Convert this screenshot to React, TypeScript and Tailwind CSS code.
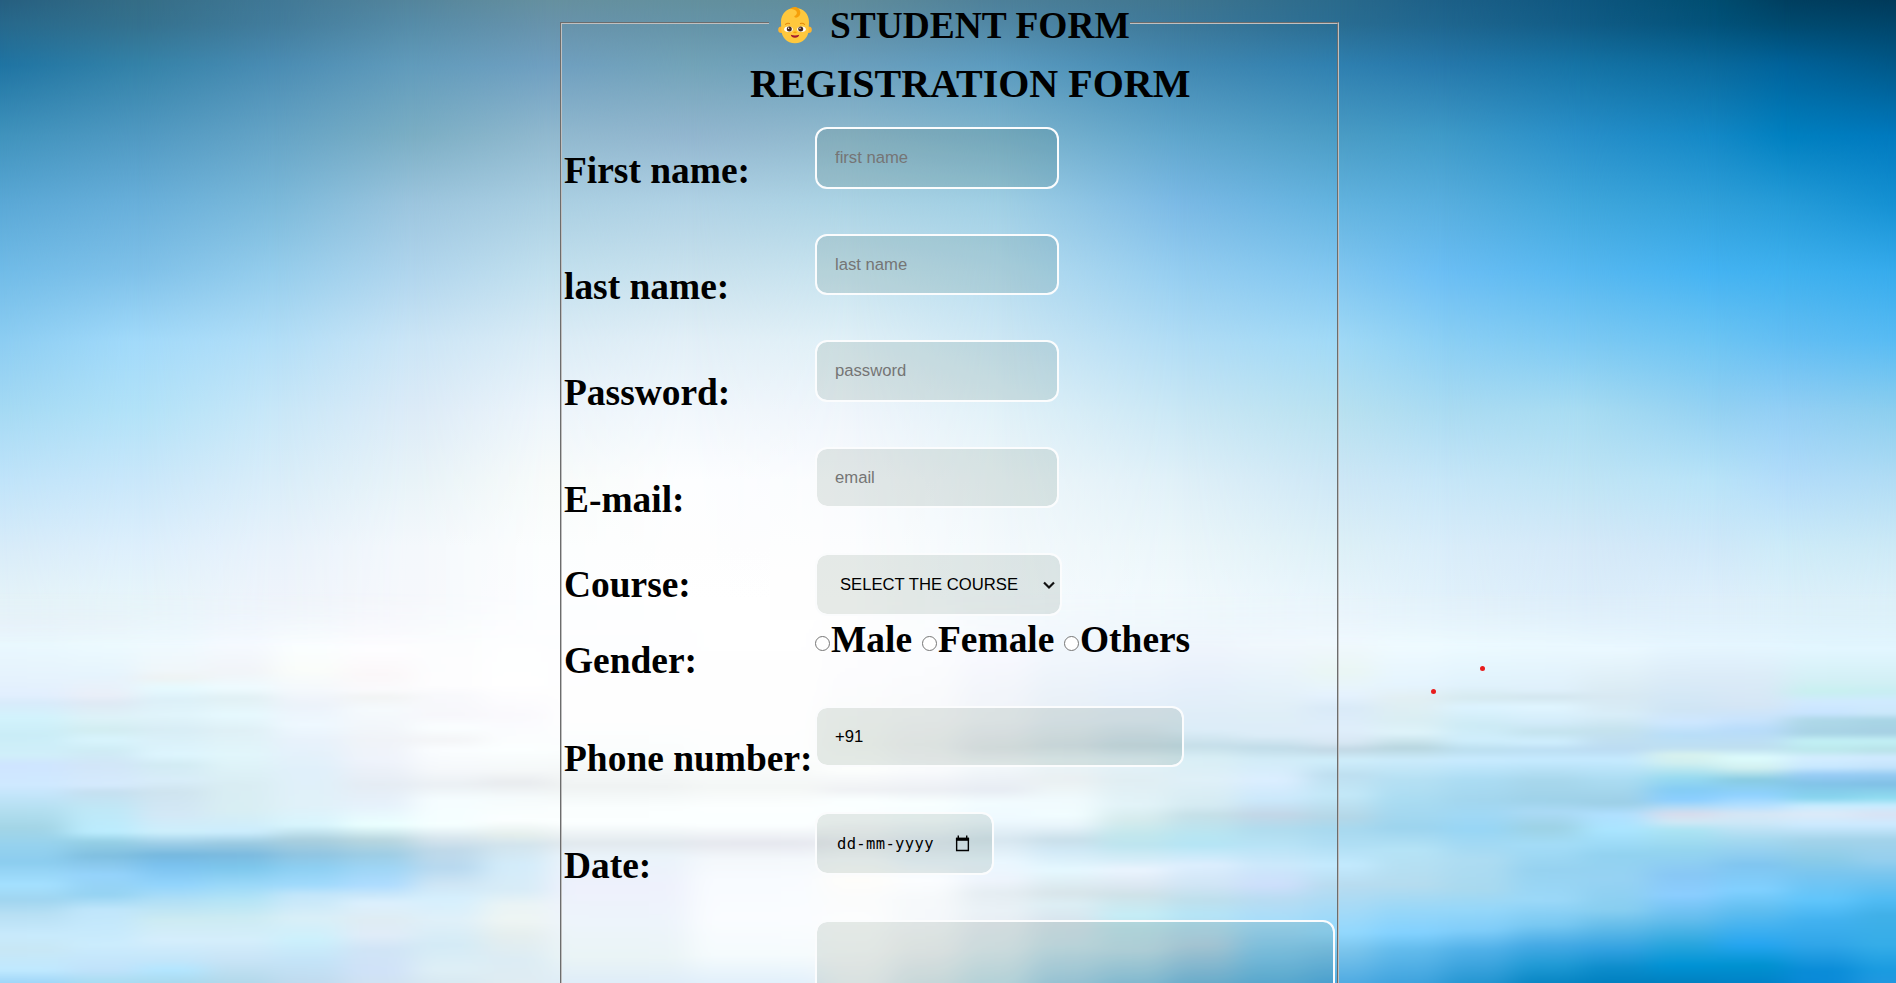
import type { ReactNode } from "react";

type Column = [number, string];

const SKY_ROWS = [0, 24, 65, 136, 203, 272, 341, 411, 480, 547, 600];

const SKY: Column[] = [
  [0, "265f80 27698c 1f74a3 4093bd 5aa8d6 71bce8 8ccdf2 a5daf4 c0e4fa d8ecf9 e5f3f9"],
  [137, "356d86 34718e 3482a8 5099c2 68afda 7fc1e9 a2dafa b2e2f8 c9e7fa ddeffc e7f5fa"],
  [274, "407896 427c9c 4a8cb3 65a4c6 7bb9da 95cdec b2def7 c8e7f8 d9edf9 e8f2fb eff4fb"],
  [412, "54859c 568ca8 619bbb 7baec4 9cc5de b0d5ed cbe5f6 dcebf7 e8f3f8 f4f8fc f6f8fc"],
  [550, "66909f 6893ab 6f9fc0 91b9cf aacfe2 c2e0ee dbecf6 edf5fb f8fbfa fcfefe fdfeff"],
  [690, "63909e 6594a8 72a3b8 92b6cf b0d2e5 c8e1ed e2eff7 f1f7fc fdfeff fefefe ffffff"],
  [850, "608c9b 6290a6 6b9fbd 90bace abd3e4 c7e3ef e0f0f7 eff5fb f9fbfe fcfdfe fefefe"],
  [1000, "4d8099 5087a5 5b9bbf 7eb4cd a0cfe4 b8ddef cde7f4 e1f1f8 eef6fa f3f9fc f5fafd"],
  [1180, "3f758f 3d7899 4288b1 5ea5cc 7ab9e5 94cdf0 b0dcf5 c9e7f5 dff0f8 ebf6fa f1f9fd"],
  [1340, "2a6a8c 2a6d92 2f80b0 4a9cc5 62b3df 80c6f0 a0d9f6 b8e1f0 cde7f6 ddf0f7 e8f5fc"],
  [1443, "1d6088 1f668f 2678ab 3f9ac8 58aede 6bbef4 8bcff4 aadbf2 c6e6f8 d9edfa e1f1fb"],
  [1580, "0f5780 115c86 1573a5 288fc9 3fa6db 57b8f0 7cc9f3 a8dcf2 bfe4f5 d5e9f8 dcedfa"],
  [1716, "004d70 02527a 0a699c 1388c6 2f9fd9 44b3f2 6cc4f3 94d1f2 b8e3f8 cfe8f9 deeffb"],
  [1785, "003f60 004a6f 00629a 0080c0 259bd8 3fb1ef 63bef3 93cff5 b2dcfa cdebf8 dcf0fa"],
  [1896, "003a5a 00456a 005888 0079be 1490d2 36abec 58bbf3 8cceee b0dcf4 cce9f6 dcf0f9"],
];

// Each band is [left edge, "offset:colour ..."] with offsets counted down from the horizon.
const HORIZON = 600;
const SEA: Column[] = [
  [0, "0:e4f1f6 22:e9f1fa 45:e9f8fe 75:e6f3fd 95:e2effe 103:d8ebfb 118:d2f3fc 135:caedf7 155:d0effa 165:cfe5ff 185:cfe9ff 195:c3e5fa 210:b3dff0 228:a3d5e6 245:96d2ee 262:8ccdef 285:a4e0ff 300:a0d5f0 315:b8e0f4 335:c8eafc 350:c8e7f5 370:c0e9ff 383:9fd6f8"],
  [68, "0:e4f1f6 22:eaf2f9 45:ecfafe 75:e6f4fd 95:eaeff8 103:dfe9f4 118:ddf2f8 130:d2edf1 140:d8f4fd 150:cfecf5 165:d2e6f8 185:d5eafd 192:c5dff0 210:bfe8f7 232:bbecfe 242:95cfe5 256:80bfe0 275:95d3fb 295:96d3f2 310:c0e6fb 345:cbecfd 370:c0e2fa 383:a8dcf2"],
  [137, "0:e8f4fa 45:effaff 70:f0f7fa 78:eef3f3 88:e6faff 100:dcf0f8 115:e0f4fb 130:d8edf5 155:ddf5fe 165:d2ebf3 180:d8edf9 192:cfe4ef 215:d3e8f6 232:cdeffc 243:a0cfe8 255:76b8de 265:7ac1ee 285:92d4fc 300:b0dff6 320:cdebf2 340:d5eefc 360:c3e6fa 370:b3e6ff 383:a9d9ee"],
  [205, "0:edf5fd 45:f5f9ff 72:f1f4f8 88:eefbff 98:e1f0f4 115:e6f9fe 130:dff0f6 155:e1f6fb 185:d9edf3 210:d8eef3 232:ccedfd 243:9ccbe2 255:7bbadf 268:7dc7ec 285:9ad8f8 300:b4e4f6 318:ccebf3 340:d5eefb 360:c8e4f6 383:b2d8ea"],
  [273, "0:f0f7fa 45:fafeff 70:fafdfa 90:f4f8fc 105:ecf2fa 125:eef8ff 140:e8f2fb 170:e0f0fa 205:e0f1f9 225:d8f5fd 240:aacfde 255:90c5e2 268:8dcff2 285:a0dafc 295:c3e6fa 318:d9eff8 340:ccf0fc 360:c4e4f8 383:c0dbef"],
  [343, "0:f6f6fb 50:fefdff 75:fbf7f9 90:fafafc 97:f2f4f4 110:f5fafd 140:f0f3f8 160:eff3fb 185:e5ecf4 205:e6f1fb 225:eaffff 240:b8d6df 255:9dcde5 268:9ed5f5 285:aedcff 295:c9e7fa 303:dcf0fd 320:dfecf3 335:e0ecf8 350:d0e4f6 370:d0e2f8 383:d0e2f3"],
  [412, "0:f8fcfe 50:fcfdfe 85:fdfdfe 95:f8f9fc 115:f7f7fb 128:fafeff 140:f4f5f7 150:fafdff 170:f5f8fb 185:ebf0f4 200:f5fdff 225:f5ffff 238:d8e6ee 250:c0d9e9 268:b8d9ef 285:cfe6f5 298:d5effd 320:dff0f9 345:d4ebf6 370:deeff6 383:d8e9f2"],
  [482, "0:fcfeff 85:ffffff 115:faf9fd 150:fbffff 170:f5f8f9 183:e8ebee 198:f5fbfc 220:fbffff 235:e4eeec 245:d2e4ed 265:d3ecfa 290:d8ecf7 305:eaf4f5 320:eef5f3 335:e5eeee 360:dcecf4 383:dfecf2"],
  [548, "0:fdfeff 120:fefefe 153:fafdfd 187:f0f3f3 207:fafefe 223:fbffff 243:e2e9ee 257:eaf3fa 287:eef1fc 323:edf4fb 357:eaf4f6 383:dfedf8"],
  [690, "0:ffffff 120:fefefe 153:fdfefe 187:f4f7f6 207:fcffff 225:fbffff 243:e6e8ef 260:f4f8fc 280:f8fbff 320:fafcff 355:f5fbfd 383:e2f0fb"],
  [822, "0:fefefe 80:fcfcfe 145:f9fbf9 170:fcfefd 190:eff1f4 200:faffff 220:fbfeff 243:eceff4 260:f7fbfd 280:fefdfa 300:fbfcfc 320:fcfdfd 350:f9fbfb 383:f0f4f7"],
  [892, "0:fcfdfe 60:fbfcfe 120:f8f9fb 145:f3f5f7 170:f9fbfd 190:eceff4 203:f8ffff 220:f6fdff 243:e2ebf3 262:eef8ff 280:fbfdff 300:f6f9fb 325:f5f8fb 350:f0f3f5 383:dce9ef"],
  [960, "0:f7fafd 60:f7f8fe 95:f2f5fa 120:f1f4f9 148:e6ebef 165:f3f8fb 190:e7ecf3 203:f2fcff 220:eef9ff 240:d8e7f0 262:eaf7ff 280:eef4fc 293:e5edf2 310:e9f1f6 325:e8eef4 350:dfecf2 383:c6e3ed"],
  [1030, "0:f2f8fd 60:f0f6fc 90:ebf2f9 120:e7eff6 146:dbe6ec 160:e9f4f8 180:eaf0f2 200:f0fafd 215:f1fdff 225:e9f5fb 240:c9dfea 250:d0e8f5 270:e5f8ff 293:d8e5ea 305:dceef4 320:d8e5ee 345:cce4ed 383:a5d1e7"],
  [1098, "0:eff8fc 60:eff5fc 90:e8f1fb 120:e2edf7 146:cddfe8 160:e3f2f9 180:e0eef3 205:e2f3f8 220:d5ebed 235:c2e7ed 245:bde5ef 260:d5edf8 270:eaf4fe 285:dce8f2 295:cfe2e8 315:c5edf6 330:c0e3ed 350:bfdeea 383:8fc8e4"],
  [1168, "0:edf7fb 50:eef4fc 80:e7f0fb 115:dfedf8 130:dcedf8 146:c6dfe9 158:d8eef5 180:dff0f8 205:d5ebf2 215:c5e0e8 235:b8e5f2 245:b5e5f5 265:dceefe 285:d0e5f5 300:bedfec 315:b5e4f6 345:b3d3e6 383:74b9de"],
  [1237, "0:ebf5fb 45:f0f7fd 85:e6f2fa 115:dfeef7 135:dcedf8 148:c1dce8 160:d2ecf8 180:dbeeff 200:cbe8fb 215:c2d6e7 230:b0dcee 245:b8e3f6 265:cce8fb 285:cddffb 300:b8dcf2 320:a8ddfa 350:85cbf0 383:60b4e1"],
  [1306, "0:ecf4fa 40:f0f8fe 72:eaf6f4 85:e8f5fa 95:e5f2fe 108:d9eaf8 130:dfeefb 142:d8e8f4 150:c2d8e5 160:cfeefb 175:bedff0 195:c3e8f8 217:b4d7e7 230:a8d9ef 245:b0def4 265:c3eafe 285:b8dcf0 310:a5daf7 333:92d8fd 350:7cc5ec 383:50abe2"],
  [1374, "0:e9f5fb 45:effbff 85:e5f4fe 98:e2eff3 120:daeef3 133:def3fa 148:b8d6df 160:cbebfb 180:b5e0f3 200:aadcf2 228:9dd4ee 250:b5e3f6 285:b5dcef 310:98d7f8 333:82d1ff 350:62bbec 383:3fa3de"],
  [1443, "0:e9f4fa 45:ecfaff 85:e0f2fc 98:d6eaf0 107:dcf3ff 125:cdebf5 140:cfeefc 150:bcdff0 160:c8ebff 180:abdcf3 200:a3d6ee 215:a0d8f5 230:98d6f5 260:addcf2 290:a8d9ef 310:95d7f9 330:80cdf9 350:50b0e8 383:2596d2"],
  [1511, "0:e5f3fa 45:ebf9ff 90:dff0fb 97:d3e6ef 107:e0f5ff 122:d3ecfa 132:c4e3ee 142:cfeefe 150:bddff3 160:c5eaff 180:a8d7ec 200:9fd2e9 212:abdaf5 228:9dd2e5 245:a3dcf7 270:96d2f0 300:9bd8f8 325:78c8f2 345:45aae5 365:209ad5 383:0886c4"],
  [1581, "0:e3f2fb 50:eaf8ff 97:d8e9f2 115:d8edf8 130:c5e2ee 150:bcdcf3 160:c5eaff 180:abdcf2 203:9dcfe6 215:b0e0ff 230:aae5ff 255:92d2f0 280:96d2f3 310:88cef0 330:5cb8e8 350:30a0e0 368:0c8ccb 383:0080c0"],
  [1649, "0:e0f1fa 45:e6f6ff 75:dcecf8 110:cfe5f5 122:cee7ff 135:b8def8 148:c0e0f2 155:d8f2ee 163:d0eff0 178:98daf0 190:84ccf5 200:8ccfff 208:b8dcf5 214:d8dcec 222:d0e8f5 230:ace4f3 250:95d5ef 275:88c7f5 295:8bcdff 320:62bcec 345:28a5dd 365:0093d5 383:0080c0"],
  [1717, "0:e0f1fa 45:e5f6ff 75:dcecf8 105:d5e6f5 120:c8e3fc 130:b8dcfa 148:bfdff0 158:ddfcfd 168:d2f0f0 180:88cbe2 195:90d2ff 206:b5e0ff 214:d5e6f5 222:cee8f8 240:a5d9f0 265:80c5f0 290:80d0ff 310:60bef0 345:25a5f0 365:0092d0 383:0082c8"],
  [1786, "0:def1fa 50:e2f6ff 80:d3f0f5 92:c8f0f0 102:d0eaff 113:c8e4ff 120:aed8e8 133:a8d3e5 141:c2f0f5 150:bce8ec 158:d3edff 167:c8e8ff 175:98ccf5 184:82c3e8 198:88d5ee 206:c8ecff 214:dceaf8 225:cceaff 240:a3d3ea 260:8acbe8 275:78c5f0 300:60c5fb 320:42b2f0 345:30a5e8 370:0a8cd8 383:0a8ad8"],
  [1855, "0:dcf0f8 50:e2f6ff 80:d3f0f5 92:c8eef2 102:d0eaff 113:cbe8fa 120:a8d5e5 133:a6d0e3 141:c2f0f5 150:b8e2e8 158:d0eaff 167:c3e3fb 175:95cbf2 184:80c0e5 198:90dcf0 206:c8ecff 214:d9e3f4 225:cceaff 240:a3d3ea 260:95cfee 275:78c5ee 300:50bbf3 315:40b0e8 345:35ade8 370:1a9be0 383:2098e0"],
];

function Backdrop() {
  return (
    <svg
      className="absolute inset-0 h-full w-full"
      viewBox="0 0 1896 983"
      preserveAspectRatio="none"
      aria-hidden="true"
    >
      <defs>
        {SKY.map(([x, colours], i) => (
          <g key={x}>
            <linearGradient id={`sky${i}`} gradientUnits="userSpaceOnUse" x1="0" y1="0" x2="0" y2="600">
              {colours.split(" ").map((c, k) => (
                <stop key={k} offset={SKY_ROWS[k] / 600} stopColor={`#${c}`} />
              ))}
            </linearGradient>
            {i > 0 && (
              <>
                <linearGradient id={`ramp${i}`} gradientUnits="userSpaceOnUse" x1={SKY[i - 1][0]} y1="0" x2={x} y2="0">
                  <stop offset="0" stopColor="#fff" stopOpacity="0" />
                  <stop offset="1" stopColor="#fff" />
                </linearGradient>
                <mask id={`fade${i}`} maskUnits="userSpaceOnUse" x="0" y="0" width="1896" height="983" style={{ maskType: "alpha" }}>
                  <rect width="1896" height="983" fill={`url(#ramp${i})`} />
                </mask>
              </>
            )}
          </g>
        ))}
        {SEA.map(([x, stops], i) => (
          <linearGradient key={x} id={`sea${i}`} gradientUnits="userSpaceOnUse" x1="0" y1={HORIZON} x2="0" y2="983">
            {stops.split(" ").map((s) => {
              const [at, c] = s.split(":");
              return <stop key={at} offset={Number(at) / 383} stopColor={`#${c}`} />;
            })}
          </linearGradient>
        ))}
        <linearGradient id="shoreRamp" gradientUnits="userSpaceOnUse" x1="0" y1="590" x2="0" y2="650">
          <stop offset="0" stopColor="#fff" stopOpacity="0" />
          <stop offset="1" stopColor="#fff" />
        </linearGradient>
        <mask id="shore" maskUnits="userSpaceOnUse" x="0" y="0" width="1896" height="983" style={{ maskType: "alpha" }}>
          <rect width="1896" height="983" fill="url(#shoreRamp)" />
        </mask>
        <filter id="soften" filterUnits="userSpaceOnUse" x="-60" y="500" width="2016" height="560" colorInterpolationFilters="sRGB">
          <feGaussianBlur stdDeviation="15 1.6" />
        </filter>
      </defs>
      {SKY.map(([x], i) => (
        <rect key={x} width="1896" height="983" fill={`url(#sky${i})`} mask={i ? `url(#fade${i})` : undefined} />
      ))}
      <g mask="url(#shore)">
        <g filter="url(#soften)">
          {SEA.map(([x], i) => {
            const left = i === 0 ? -60 : x;
            return <rect key={x} x={left} y="500" width={1960 - left} height="560" fill={`url(#sea${i})`} />;
          })}
        </g>
      </g>
    </svg>
  );
}

function Baby() {
  return (
    <svg className="mt-[6px] mr-[18px] ml-[9px] h-[38px] w-[34px] shrink-0" viewBox="0 0 34 38" aria-label="baby">
      <circle cx="3.4" cy="23.8" r="3.2" fill="#ffb52e" />
      <circle cx="30.6" cy="23.8" r="3.2" fill="#ffb52e" />
      <path d="M17 2C8.500 2 3 8 3 16c0 3 .4 5 .4 8 0 7 5.500 13.300 13.600 13.300S30.600 31 30.600 24c0-3 .4-5 .4-8C31 8 25.500 2 17 2Z" fill="#ffc83d" />
      <path d="M12 3C14 .700 18 .200 20.300 2.300c3.200 2.800 2.400 7.600-.8 9-1.500.7-3.200.2-3.200-.7 0-.8 1-1 1.700-1.700 1.600-1.600.9-4.100-1.100-5-1.500-.7-3.100-.7-4.900-.9Z" fill="#f59f0a" />
      <path d="M7.500 18.300c1.200-1 2.800-1.200 4-.7M22.500 17.600c1.200-.5 2.800-.3 4 .7" stroke="#e5890a" strokeWidth="1.100" fill="none" strokeLinecap="round" />
      <ellipse cx="10.500" cy="23.300" rx="4.300" ry="2.700" fill="#fff" />
      <ellipse cx="23.500" cy="23.300" rx="4.300" ry="2.700" fill="#fff" />
      <circle cx="11.300" cy="23" r="2.500" fill="#4a2a1d" />
      <circle cx="22.700" cy="23" r="2.500" fill="#4a2a1d" />
      <circle cx="10.600" cy="22.200" r=".7" fill="#fff" />
      <circle cx="22" cy="22.200" r=".7" fill="#fff" />
      <ellipse cx="17" cy="26.300" rx="1.800" ry=".9" fill="#f59f0a" />
      <path d="M12.800 28.800c2.400 1 6 1 8.400 0-.2 1.900-2 3-4.200 3s-4-1.100-4.200-3Z" fill="#a3182f" />
    </svg>
  );
}

const control =
  "block shrink-0 rounded-[12px] border-2 border-[#fbfcfd] bg-[#1e46281b] bg-clip-padding font-['Liberation_Sans',Arial,sans-serif] text-[16.67px] font-normal text-black outline-none placeholder:text-[#757575] placeholder:opacity-100";

function Row({ label, rowClass, labelClass, children }: { label: string; rowClass: string; labelClass: string; children: ReactNode }) {
  return (
    <div className={`flex items-start ${rowClass}`}>
      <label className={`w-[251px] shrink-0 whitespace-nowrap ${labelClass}`}>{label}</label>
      {children}
    </div>
  );
}

function Choice({ name, className }: { name: string; className: string }) {
  return (
    <label className={`flex items-start ${className}`}>
      <input
        type="radio"
        name="gender"
        className="mt-[18px] mr-[1px] h-[15px] w-[15px] shrink-0 appearance-none rounded-full border border-[#767676] bg-white"
      />
      {name}
    </label>
  );
}

export default function App() {
  return (
    <main className="relative h-screen min-h-[983px] overflow-hidden font-['Liberation_Serif','Times_New_Roman',serif] text-[37.44px] leading-[44px] font-bold text-black">
      <Backdrop />
      <form className="relative ml-[560px] w-[779px]">
        <fieldset className="h-[1100px] border-2 border-[#c0c0c0] [border-style:groove]">
          <legend className="mx-auto h-[46px] w-[361px]">
            <span className="flex whitespace-nowrap">
              <Baby />
              <span className="pt-[4px]">STUDENT FORM</span>
            </span>
          </legend>
          <h1 className="h-[81px] pt-[16px] pl-[188px] text-[40px] whitespace-nowrap">REGISTRATION FORM</h1>
          <div className="pl-[2px]">
            <Row label="First name:" rowClass="h-[107px]" labelClass="pt-[22px]">
              <input className={`${control} h-[62px] w-[244px] px-[18px]`} placeholder="first name" />
            </Row>
            <Row label="last name:" rowClass="h-[106px]" labelClass="pt-[31px]">
              <input className={`${control} h-[61px] w-[244px] px-[18px]`} placeholder="last name" />
            </Row>
            <Row label="Password:" rowClass="h-[107px]" labelClass="pt-[31px]">
              <input className={`${control} h-[62px] w-[244px] px-[18px]`} type="password" placeholder="password" />
            </Row>
            <Row label="E-mail:" rowClass="h-[106px]" labelClass="pt-[31px]">
              <input className={`${control} h-[61px] w-[244px] px-[18px]`} placeholder="email" />
            </Row>
            <Row label="Course:" rowClass="h-[62px]" labelClass="pt-[10px]">
              <button type="button" className={`${control} flex h-[63px] w-[247px] items-center justify-between pr-[4px] pl-[23px]`}>
                <span className="whitespace-nowrap">SELECT THE COURSE</span>
                <svg className="h-[12px] w-[14px]" viewBox="0 0 14 12" fill="none" stroke="#111" strokeWidth="2.200">
                  <path d="M2 3.500 7 8.500l5-5" />
                </svg>
              </button>
            </Row>
            <Row label="Gender:" rowClass="h-[91px]" labelClass="pt-[24px]">
              <div className="flex pt-[3px] whitespace-nowrap">
                <Choice name="Male" className="w-[107px]" />
                <Choice name="Female" className="w-[142px]" />
                <Choice name="Others" className="" />
              </div>
            </Row>
            <Row label="Phone number:" rowClass="h-[106px]" labelClass="pt-[31px]">
              <input className={`${control} h-[61px] w-[369px] px-[18px]`} defaultValue="+91" />
            </Row>
            <Row label="Date:" rowClass="h-[108px]" labelClass="pt-[32px]">
              <div className={`${control} flex h-[63px] w-[179px] items-center justify-between pr-[22px] pl-[20px]`}>
                <span className="pt-[1px] font-['DejaVu_Sans_Mono',monospace] text-[15.500px] tracking-[0.35px]">dd-mm-yyyy</span>
                <svg className="h-[17px] w-[15px]" viewBox="0 0 16 17" fill="none" stroke="#000" preserveAspectRatio="none">
                  <path d="M1.750 3.500h12.500v12H1.750z" strokeWidth="1.500" />
                  <path d="M1 4.300h14" strokeWidth="3" />
                  <path d="M3.500.500v3M12.500.500v3" strokeWidth="1.500" />
                </svg>
              </div>
            </Row>
            <div className="pl-[251px]">
              <textarea className={`${control} h-[120px] w-[520px] resize-none`} />
            </div>
          </div>
        </fieldset>
      </form>
      <span className="absolute top-[666px] left-[1480px] h-[5px] w-[5px] rounded-full bg-[#e81c1c]" />
      <span className="absolute top-[689px] left-[1431px] h-[5px] w-[5px] rounded-full bg-[#e81c1c]" />
    </main>
  );
}
